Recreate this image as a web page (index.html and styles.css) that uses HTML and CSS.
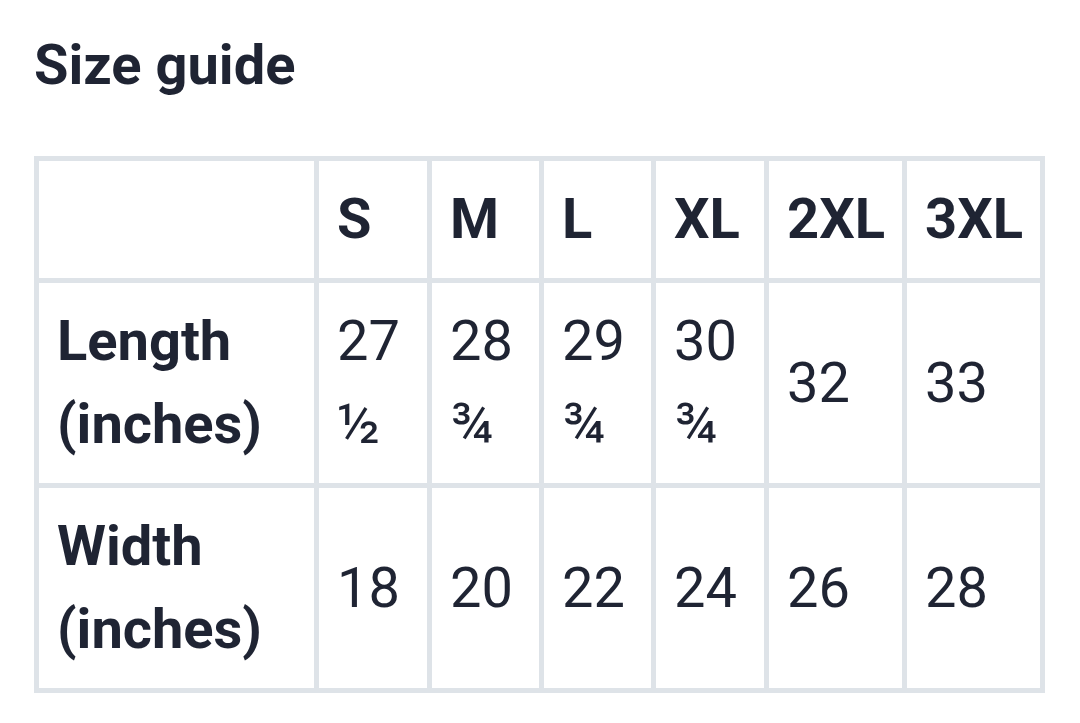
FILE: index.html
```html
<!DOCTYPE html>
<html lang="en">
<head>
<meta charset="utf-8">
<title>Size guide</title>
<link rel="stylesheet" href="styles.css">
</head>
<body>
<main class="page">
  <h2 class="title">Size guide</h2>
  <table class="sizes">
    <colgroup>
      <col class="c-label">
      <col class="c-s">
      <col class="c-m">
      <col class="c-m">
      <col class="c-s">
      <col class="c-w">
      <col class="c-w">
    </colgroup>
    <thead>
      <tr>
        <th></th>
        <th>S</th>
        <th>M</th>
        <th>L</th>
        <th>XL</th>
        <th>2XL</th>
        <th>3XL</th>
      </tr>
    </thead>
    <tbody>
      <tr>
        <th>Length (inches)</th>
        <td>27 ½</td>
        <td>28 ¾</td>
        <td>29 ¾</td>
        <td>30 ¾</td>
        <td>32</td>
        <td>33</td>
      </tr>
      <tr>
        <th>Width (inches)</th>
        <td>18</td>
        <td>20</td>
        <td>22</td>
        <td>24</td>
        <td>26</td>
        <td>28</td>
      </tr>
    </tbody>
  </table>
</main>
</body>
</html>
```

FILE: styles.css
```css
html, body {
  margin: 0;
  padding: 0;
  background: #ffffff;
}

body {
  font-family: Roboto, "Noto Sans", "Liberation Sans", sans-serif;
  color: #1f2433;
}

.page {
  padding: 32px 0 0 34px;
}

.title {
  margin: 0 0 57px 0;
  font-size: 56px;
  font-weight: 700;
  line-height: 1.2;
}

.sizes {
  table-layout: fixed;
  width: 1011px;
  border-collapse: separate;
  border-spacing: 5px;
  background: #dee3e8;
  font-size: 56px;
  line-height: 83px;
}

.c-label { width: 275px; }
.c-s { width: 108px; }
.c-m { width: 107px; }
.c-w { width: 133px; }

.sizes th,
.sizes td {
  box-sizing: border-box;
  background: #ffffff;
  padding: 17px 10px 17px 18px;
  text-align: left;
  vertical-align: middle;
}

.sizes th {
  font-weight: 700;
}

.sizes td {
  font-weight: 400;
}
```
